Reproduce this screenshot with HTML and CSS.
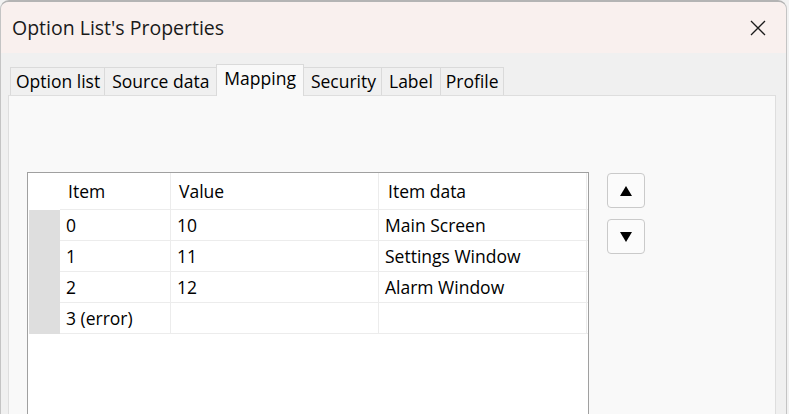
FILE: index.html
```html
<!DOCTYPE html>
<html>
<head>
<meta charset="utf-8">
<link rel="stylesheet" href="styles.css">
</head>
<body>
<div class="window">
  <div class="titlebar">
    <span class="title">Option List's Properties</span>
    <svg class="close" width="16" height="16" viewBox="0 0 16 16"><path d="M1 1 L15 15 M15 1 L1 15" stroke="#1b1b1b" stroke-width="1.3" fill="none"/></svg>
  </div>
  <div class="body">
    <div class="tabs">
      <div class="tab first">Option list</div>
      <div class="tab">Source data</div>
      <div class="tab active">Mapping</div>
      <div class="tab">Security</div>
      <div class="tab">Label</div>
      <div class="tab">Profile</div>
    </div>
    <div class="panel">
      <div class="content">
        <div class="grid">
          <div class="row head">
            <div class="cell rh"></div>
            <div class="cell c1">Item</div>
            <div class="cell c2">Value</div>
            <div class="cell c3">Item data</div>
            <div class="cell rest"></div>
          </div>
          <div class="row">
            <div class="cell rh"></div>
            <div class="cell c1">0</div>
            <div class="cell c2">10</div>
            <div class="cell c3">Main Screen</div>
            <div class="cell rest"></div>
          </div>
          <div class="row">
            <div class="cell rh"></div>
            <div class="cell c1">1</div>
            <div class="cell c2">11</div>
            <div class="cell c3">Settings Window</div>
            <div class="cell rest"></div>
          </div>
          <div class="row">
            <div class="cell rh"></div>
            <div class="cell c1">2</div>
            <div class="cell c2">12</div>
            <div class="cell c3">Alarm Window</div>
            <div class="cell rest"></div>
          </div>
          <div class="row">
            <div class="cell rh"></div>
            <div class="cell c1">3 (error)</div>
            <div class="cell c2"></div>
            <div class="cell c3"></div>
            <div class="cell rest"></div>
          </div>
        </div>
        <div class="buttons">
          <div class="btn"><svg width="12" height="10" viewBox="0 0 12 10"><polygon points="6,0 12,10 0,10" fill="#000"/></svg></div>
          <div class="btn"><svg width="12" height="10" viewBox="0 0 12 10"><polygon points="0,0 12,0 6,10" fill="#000"/></svg></div>
        </div>
      </div>
    </div>
  </div>
</div>
</body>
</html>
```

FILE: styles.css
```css
html, body {
  margin: 0;
  padding: 0;
  height: 100%;
  overflow: hidden;
}
body {
  background: #f2f2f2;
  font-family: "Open Sans", "Noto Sans", sans-serif;
  color: #000;
}
.window {
  width: 787px;
  height: 414px;
  box-sizing: border-box;
  border-top: 2px solid #b4b4b4;
  border-left: 1px solid #c4c4c4;
  border-right: 1px solid #c4c4c4;
  border-radius: 9px 9px 0 0;
  background: #f0f0f0;
  overflow: hidden;
  display: flex;
  flex-direction: column;
}
.titlebar {
  height: 51px;
  background: #f9f0ee;
  display: flex;
  align-items: center;
  justify-content: space-between;
  padding: 0 20px 0 11px;
  flex-shrink: 0;
}
.title {
  font-size: 19.5px;
  color: #1a1a1a;
}
.close {
  display: block;
}
.body {
  flex: 1;
  padding: 11px 10px 0 7px;
  display: flex;
  flex-direction: column;
}
.tabs {
  display: flex;
  align-items: flex-end;
  padding-left: 2px;
  height: 31px;
  position: relative;
  z-index: 1;
}
.tab {
  height: 28px;
  box-sizing: border-box;
  padding: 0 7px;
  border: 1px solid #dadada;
  border-bottom: none;
  border-right: none;
  background: #f0f0f0;
  font-size: 17.5px;
  line-height: 27px;
  white-space: nowrap;
}
.tab.first {
  padding-left: 5px;
  padding-right: 4px;
}
.tab:last-child {
  border-right: 1px solid #dadada;
  padding-right: 4px;
  padding-left: 5px;
}
.tab.active {
  height: 32px;
  background: #f9f9f9;
  line-height: 27px;
  border-right: 1px solid #dadada;
  margin-bottom: -1px;
  padding-bottom: 5px;
}
.tab.active + .tab {
  border-left: none;
  padding-right: 5px;
}
.panel {
  flex: 1;
  background: #f9f9f9;
  border: 1px solid #dedede;
  border-bottom: none;
  padding: 76px 0 0 18px;
}
.content {
  display: flex;
  align-items: flex-start;
  gap: 18px;
}
.grid {
  width: 562px;
  height: 320px;
  box-sizing: border-box;
  border: 1px solid #a0a0a0;
  background: #fff;
  font-size: 17.5px;
}
.row {
  display: flex;
  height: 31px;
}
.row.head {
  height: 37px;
}
.cell {
  box-sizing: border-box;
  display: flex;
  align-items: center;
  white-space: nowrap;
  border-right: 1px solid #ececec;
  border-bottom: 1px solid #ececec;
}
.cell.rh {
  width: 32px;
  border-right: none;
  border-bottom: none;
}
.row:not(.head) .cell.rh {
  background: #dedede;
  margin-left: 1px;
  width: 31px;
}
.c1 { width: 111px; padding-left: 6px; }
.c2 { width: 208px; padding-left: 6px; }
.c3 { width: 208px; padding-left: 6px; }
.head .c1 { padding-left: 8px; }
.head .c2 { padding-left: 8px; }
.head .c3 { padding-left: 9px; }
.rest {
  flex: 1;
  border-right: none;
}
.buttons {
  display: flex;
  flex-direction: column;
  gap: 11px;
  padding-top: 1px;
}
.btn {
  width: 38px;
  height: 35px;
  box-sizing: border-box;
  border: 1px solid #cacaca;
  border-radius: 4px;
  background: #fbfbfb;
  display: flex;
  align-items: center;
  justify-content: center;
}
.btn svg {
  display: block;
}
```
